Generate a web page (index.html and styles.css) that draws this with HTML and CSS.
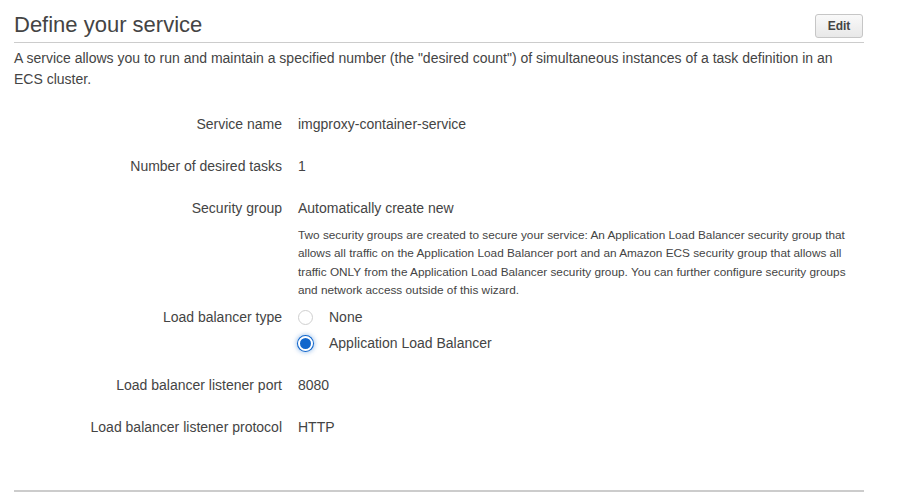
FILE: index.html
```
<!DOCTYPE html>
<html>
<head>
<meta charset="utf-8">
<link rel="stylesheet" href="styles.css">
</head>
<body>
<div class="panel">
  <div class="header">
    <h1 class="title">Define your service</h1>
    <button class="btn">Edit</button>
  </div>
  <p class="desc">A service allows you to run and maintain a specified number (the "desired count") of simultaneous instances of a task definition in an ECS cluster.</p>
  <div class="fields">
    <div class="row">
      <div class="label">Service name</div>
      <div class="value">imgproxy-container-service</div>
    </div>
    <div class="row">
      <div class="label">Number of desired tasks</div>
      <div class="value">1</div>
    </div>
    <div class="row">
      <div class="label">Security group</div>
      <div class="value">
        <div>Automatically create new</div>
        <p class="help">Two security groups are created to secure your service: An Application Load Balancer security group that allows all traffic on the Application Load Balancer port and an Amazon ECS security group that allows all traffic ONLY from the Application Load Balancer security group. You can further configure security groups and network access outside of this wizard.</p>
      </div>
    </div>
    <div class="row tight">
      <div class="label">Load balancer type</div>
      <div class="value">
        <div class="radio"><span class="dot"></span><span>None</span></div>
        <div class="radio"><span class="dot on"></span><span>Application Load Balancer</span></div>
      </div>
    </div>
    <div class="row">
      <div class="label">Load balancer listener port</div>
      <div class="value">8080</div>
    </div>
    <div class="row">
      <div class="label">Load balancer listener protocol</div>
      <div class="value">HTTP</div>
    </div>
  </div>
  <div class="footer"></div>
</div>
</body>
</html>
```
FILE: styles.css
```
html, body {
  margin: 0;
  background: #fff;
}
body {
  font-family: "Liberation Sans", Arial, sans-serif;
  color: #444;
  font-size: 14px;
}
.panel {
  width: 850px;
  margin-left: 14px;
}
.header {
  display: flex;
  justify-content: space-between;
  align-items: flex-end;
  border-bottom: 1px solid #ccc;
  height: 43px;
  box-sizing: border-box;
}
.title {
  margin: 0 0 4px 0;
  font-size: 22px;
  font-weight: normal;
  line-height: 26px;
  color: #444;
}
.btn {
  font-family: "Liberation Sans", Arial, sans-serif;
  font-size: 12px;
  font-weight: bold;
  color: #444;
  height: 24px;
  width: 48px;
  margin: 0 1px 4px 0;
  padding: 0;
  border: 1px solid #c6c6c6;
  border-radius: 3px;
  background: linear-gradient(#f9f9f9, #e8e8e8);
}
.desc {
  margin: 5px 0 0 0;
  line-height: 21px;
  padding-right: 20px;
}
.fields {
  padding-top: 24px;
  display: flex;
  flex-direction: column;
  gap: 22px;
}
.row {
  display: grid;
  grid-template-columns: 268px 1fr;
  column-gap: 16px;
  line-height: 20px;
}
.label {
  text-align: right;
}
.help {
  margin: 8px 0 0 0;
  font-size: 11.8px;
  line-height: 18.3px;
  padding-right: 0;
}
.tight {
  margin-top: -14px;
}
.radio {
  display: flex;
  align-items: center;
  gap: 16px;
  height: 20px;
}
.radio + .radio {
  margin-top: 6px;
}
.dot {
  width: 15px;
  height: 15px;
  border-radius: 50%;
  border: 1px solid #cfcfcf;
  box-sizing: border-box;
  background: #fff;
  flex: none;
}
.dot.on {
  border: 2px solid #fff;
  background: #1166cc;
  box-shadow: 0 0 0 1px #1166cc, 0 0 4px 2px rgba(17,102,204,0.35);
  width: 15px;
  height: 15px;
}
.footer {
  margin-top: 53px;
  border-top: 2px solid #ccc;
}
```
